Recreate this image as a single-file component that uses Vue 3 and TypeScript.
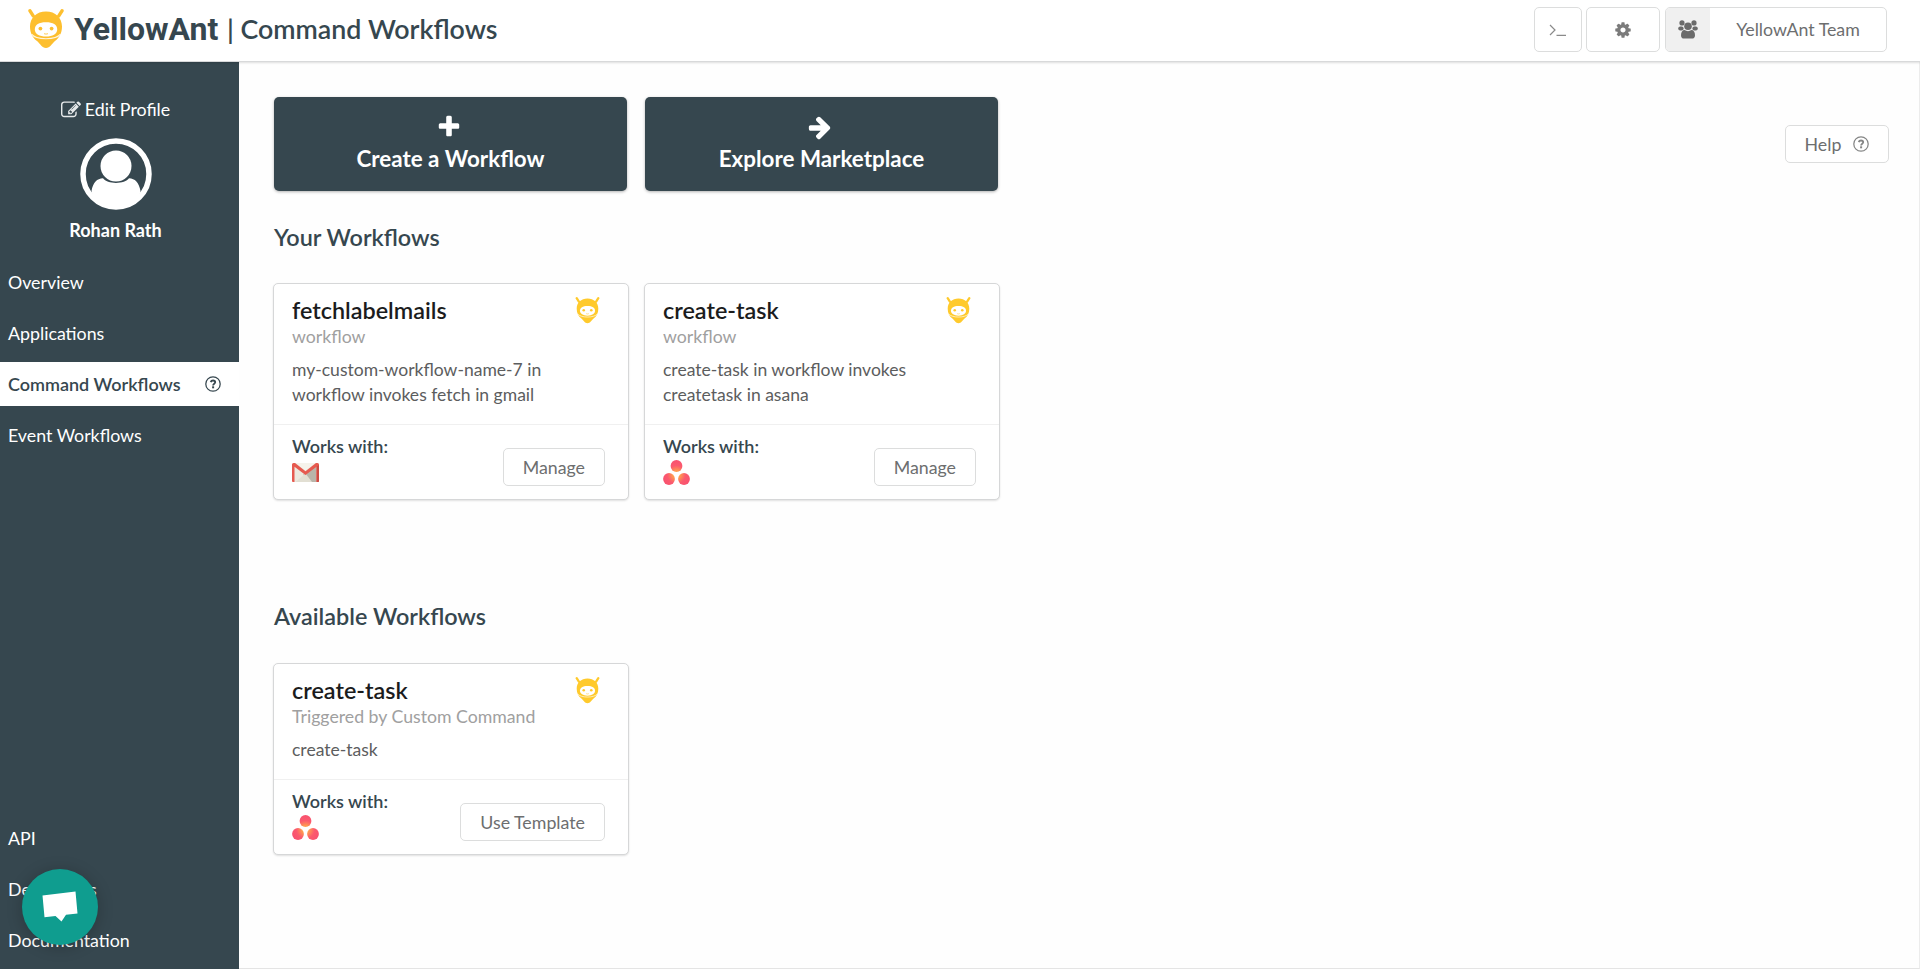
<script setup lang="ts">
interface Workflow {
  title: string
  meta: string
  lines: string[]
  app: 'gmail' | 'asana'
  action: string
}

interface Section {
  heading: string
  items: Workflow[]
}

const sections: Section[] = [
  {
    heading: 'Your Workflows',
    items: [
      {
        title: 'fetchlabelmails',
        meta: 'workflow',
        lines: ['my-custom-workflow-name-7 in', 'workflow invokes fetch in gmail'],
        app: 'gmail',
        action: 'Manage',
      },
      {
        title: 'create-task',
        meta: 'workflow',
        lines: ['create-task in workflow invokes', 'createtask in asana'],
        app: 'asana',
        action: 'Manage',
      },
    ],
  },
  {
    heading: 'Available Workflows',
    items: [
      {
        title: 'create-task',
        meta: 'Triggered by Custom Command',
        lines: ['create-task'],
        app: 'asana',
        action: 'Use Template',
      },
    ],
  },
]

const mainNav = ['Overview', 'Applications', 'Command Workflows', 'Event Workflows']
const footNav = ['API', 'Developers', 'Documentation']
const activeNav = 'Command Workflows'
</script>

<template>
  <!-- Shared symbols -->
  <svg class="defs" aria-hidden="true">
    <defs>
      <radialGradient id="asana-fill" gradientUnits="userSpaceOnUse" cx="13.5" cy="15.5" r="15">
        <stop offset="0" stop-color="#ffb440" />
        <stop offset="0.25" stop-color="#ff9a50" />
        <stop offset="0.6" stop-color="#fb5a6e" />
        <stop offset="1" stop-color="#f8506f" />
      </radialGradient>
      <symbol id="ant" viewBox="0 0 36 40">
        <path d="M2 1.8L5.2 6.8M34 1.8L30.8 6.8" stroke="currentColor" stroke-width="3.4" stroke-linecap="round" fill="none" />
        <path d="M18 2.4C27.5 2.4 34 8.6 34 17.5C34 24 31.5 28.5 27 32C24 34.5 22 39 18 39C14 39 12 34.5 9 32C4.5 28.5 2 24 2 17.5C2 8.6 8.500 2.400 18 2.400Z" fill="currentColor" />
        <path d="M6.800 20.500C6.800 15.500 11 13.200 18 13.200C25 13.200 29.200 15.500 29.200 20.500C29.200 25 24.500 27.600 18 27.600C11.500 27.600 6.800 25 6.800 20.500Z" fill="#fff" />
        <path d="M3.500 25.200C8 31.200 28 31.200 32.500 25.200" stroke="#fff" stroke-width="1.100" fill="none" opacity=".85" />
        <circle cx="12.400" cy="19.600" r="1.900" fill="currentColor" />
        <circle cx="23.600" cy="19.600" r="1.900" fill="currentColor" />
        <path d="M16 24.700Q18 25.500 20 24.700" stroke="currentColor" stroke-width=".8" fill="none" />
      </symbol>
      <symbol id="question" viewBox="0 0 16 16">
        <circle cx="8" cy="8" r="7.200" fill="none" stroke="currentColor" stroke-width="1.250" />
        <path d="M5.700 6.100C6.100 4.900 6.900 4.500 8 4.500C9.300 4.500 10.200 5.200 10.200 6.300C10.200 7.700 8.100 7.700 8.100 9.400" fill="none" stroke="currentColor" stroke-width="1.800" />
        <rect x="7.100" y="10.300" width="2" height="2" fill="currentColor" />
      </symbol>
    </defs>
  </svg>

  <div class="page">
    <header class="topbar">
      <div class="brand">
        <svg class="brand-logo"><use href="#ant" /></svg>
        <span class="wordmark">YellowAnt</span>
        <span class="page-title">| Command Workflows</span>
      </div>
      <div class="tools">
        <button class="btn terminal" aria-label="Console">
          <svg width="18" height="14" viewBox="0 0 18 14"><path d="M1 2L6 7L1 12M7.500 12.300H17" fill="none" stroke="#8a8a8a" stroke-width="1.200" /></svg>
        </button>
        <button class="btn gear" aria-label="Settings">
          <svg width="18" height="18" viewBox="0 0 1792 1792"><path fill="#7b7b7b" d="M1152 896q0-106-75-181t-181-75-181 75-75 181 75 181 181 75 181-75 75-181zm512-109v222q0 12-8 23t-20 13l-185 28q-19 54-39 91 35 50 107 138 10 12 10 25t-9 23q-27 37-99 108t-94 71q-12 0-26-9l-138-108q-44 23-91 38-16 136-29 186-7 28-36 28h-222q-14 0-24.500-8.500t-11.500-21.500l-28-184q-49-16-90-37l-141 107q-10 9-25 9-14 0-25-11-126-114-165-168-7-10-7-23 0-12 8-23 15-21 51-66.500t54-70.500q-27-50-41-99l-183-27q-13-2-21-12.500t-8-23.500v-222q0-12 8-23t19-13l186-28q14-46 39-92-40-57-107-138-10-12-10-24 0-10 9-23 26-36 98.500-107.500t94.500-71.500q13 0 26 10l138 107q44-23 91-38 16-136 29-186 7-28 36-28h222q14 0 24.500 8.500t11.500 21.500l28 184q49 16 90 37l142-107q9-9 24-9 13 0 25 10 129 119 165 170 7 8 7 22 0 12-8 23-15 21-51 66.500t-54 70.500q26 50 41 98l183 28q13 2 21 12.500t8 23.500z" /></svg>
        </button>
        <button class="btn team">
          <span class="team-icon">
            <svg width="20" height="19" viewBox="0 0 20 19" fill="#6b6b6b">
              <circle cx="4" cy="2.900" r="2.600" />
              <circle cx="16" cy="2.900" r="2.600" />
              <circle cx="10" cy="6.300" r="3.800" />
              <rect x="0.200" y="6.400" width="5.400" height="4.200" rx="2" />
              <rect x="14.400" y="6.400" width="5.400" height="4.200" rx="2" />
              <path d="M3 15.200C3 12 4.500 10 6.500 10C8.500 11.500 11.500 11.500 13.500 10C15.500 10 17 12 17 15.200C17 17.600 15.800 18.600 14 18.600H6C4.200 18.600 3 17.600 3 15.200Z" />
            </svg>
          </span>
          <span class="team-name">YellowAnt Team</span>
        </button>
      </div>
    </header>

    <div class="body">
      <aside class="sidebar">
        <div class="edit">
          <svg width="20" height="20" viewBox="0 0 1792 1792"><path fill="#e6e9ea" d="M888 1184l116-116-152-152-116 116v56h96v96h56zm440-720q-16-16-33 1l-350 350q-17 17-1 33t33-1l350-350q17-17 1-33zm80 594v190q0 119-84.500 203.500t-203.500 84.500h-832q-119 0-203.500-84.500t-84.500-203.500v-832q0-119 84.500-203.500t203.500-84.500h832q63 0 117 25 15 7 18 23 3 17-9 29l-49 49q-14 14-32 8-23-6-45-6h-832q-66 0-113 47t-47 113v832q0 66 47 113t113 47h832q66 0 113-47t47-113v-126q0-13 9-22l64-64q15-15 35-7t20 29zm-96-738l288 288-672 672h-288v-288zm444 132l-92 92-288-288 92-92q28-28 68-28t68 28l152 152q28 28 28 68t-28 68z" /></svg>
          <span>Edit Profile</span>
        </div>
        <svg class="avatar" viewBox="0 0 72 72">
          <circle cx="36" cy="36" r="33" fill="none" stroke="#fff" stroke-width="5.500" />
          <path d="M11.500 53C13 44.500 17 40.500 23 40.300C27 46.500 45 46.500 49 40.300C55 40.500 59 44.500 60.500 53L58 62L36 70L14 62Z" fill="#fff" />
          <circle cx="36" cy="28" r="15.500" fill="#fff" />
        </svg>
        <div class="user">Rohan Rath</div>
        <nav class="nav">
          <a v-for="item in mainNav" :key="item" :class="{ active: item === activeNav }">
            <span>{{ item }}</span>
            <svg v-if="item === activeNav" class="nav-help"><use href="#question" /></svg>
          </a>
        </nav>
        <nav class="nav foot">
          <a v-for="item in footNav" :key="item"><span>{{ item }}</span></a>
        </nav>
      </aside>

      <main class="content">
        <div class="primary">
          <div class="actions">
            <button class="cta">
              <svg width="26" height="26" viewBox="0 0 1792 1792"><path fill="#fff" d="M1600 736v192q0 40-28 68t-68 28h-416v416q0 40-28 68t-68 28h-192q-40 0-68-28t-28-68v-416h-416q-40 0-68-28t-28-68v-192q0-40 28-68t68-28h416v-416q0-40 28-68t68-28h192q40 0 68 28t28 68v416h416q40 0 68 28t28 68z" /></svg>
              <span>Create a Workflow</span>
            </button>
            <button class="cta">
              <svg width="26" height="26" viewBox="0 0 1792 1792"><path fill="#fff" d="M1600 960q0 54-37 91l-651 651q-39 37-91 37-51 0-90-37l-75-75q-38-38-38-91t38-91l293-293h-704q-52 0-84.500-37.500t-32.500-90.500v-128q0-53 32.500-90.500t84.500-37.500h704l-293-294q-38-36-38-90t38-90l75-75q38-38 90-38 53 0 91 38l651 651q37 35 37 90z" /></svg>
              <span>Explore Marketplace</span>
            </button>
          </div>

          <section v-for="section in sections" :key="section.heading" class="section">
            <h2>{{ section.heading }}</h2>
            <div class="cards">
              <article v-for="(wf, i) in section.items" :key="i" class="card">
                <div class="card-body">
                  <div class="card-text">
                    <h3>{{ wf.title }}</h3>
                    <div class="meta">{{ wf.meta }}</div>
                    <div class="desc">
                      <div v-for="line in wf.lines" :key="line">{{ line }}</div>
                    </div>
                  </div>
                  <svg class="card-ant"><use href="#ant" /></svg>
                </div>
                <div class="card-foot">
                  <div class="works">
                    <div class="works-label">Works with:</div>
                    <svg v-if="wf.app === 'gmail'" class="app" viewBox="0 0 27 27">
                      <rect x="0.500" y="4" width="26" height="19" rx="1" fill="#ece9df" />
                      <path d="M13.500 14.500L24 6V23H19L11 15.500Z" fill="#b9b5aa" />
                      <path d="M3.500 23L13.500 14.500L20 23Z" fill="#e2dfd3" />
                      <path d="M3.500 4H23.500L13.500 11.700Z" fill="#f5f3ec" />
                      <path d="M0 5.500Q0 4 1.500 4H3L13.500 12.300L24 4H25.500Q27 4 27 5.500V22Q27 23 26 23H24.500V7.700L13.500 16L2.500 7.700V23H1Q0 23 0 22Z" fill="#e65a50" />
                      <path d="M24.500 7.700L27 6V22Q27 23 26 23H24.500Z" fill="#cd4b43" />
                    </svg>
                    <svg v-else class="app" viewBox="0 0 27 27" fill="url(#asana-fill)">
                      <circle cx="13.500" cy="7" r="5.900" />
                      <circle cx="6" cy="20" r="5.900" />
                      <circle cx="21" cy="20" r="5.900" />
                    </svg>
                  </div>
                  <button class="btn card-btn">{{ wf.action }}</button>
                </div>
              </article>
            </div>
          </section>
        </div>

        <button class="btn help">
          <span>Help</span>
          <svg class="help-icon"><use href="#question" /></svg>
        </button>
      </main>
    </div>

    <div class="chat">
      <svg width="36" height="32" viewBox="0 0 36 32"><path d="M0.500 4.500L33.500 0.500L35.500 22.500L24 23.700L19.500 30.500L13.500 25L2.500 26.200Z" fill="#fff" /></svg>
    </div>
  </div>
</template>

<style>
body {
  margin: 0;
  overflow: hidden;
}
</style>

<style scoped>
.defs {
  position: absolute;
  width: 0;
  height: 0;
}

.page {
  position: relative;
  box-sizing: border-box;
  display: flex;
  flex-direction: column;
  height: 969px;
  background: #fefefe;
  color: #36474f;
  font: 17.8px/25px Lato, "Liberation Sans", sans-serif;
}

.page svg {
  display: block;
  flex: none;
}

button {
  font: inherit;
  margin: 0;
  padding: 0;
}

.topbar {
  position: relative;
  z-index: 1;
  box-sizing: border-box;
  display: flex;
  flex: none;
  justify-content: space-between;
  height: 62px;
  padding: 0 33px 0 28px;
  background: #fff;
  border-bottom: 1px solid #d8d9da;
  box-shadow: 0 1px 2px rgba(0, 0, 0, 0.13);
}

.brand {
  display: flex;
  align-items: center;
  height: 58px;
}

.brand .brand-logo {
  width: 36px;
  height: 40px;
  color: #fdbf2f;
}

.wordmark {
  margin-left: 10px;
  width: 145px;
  font: 700 32px/40px Roboto, sans-serif;
}

.page-title {
  margin-left: 8px;
  padding-top: 1px;
  font-size: 26.800px;
  font-weight: 600;
  white-space: nowrap;
}

.tools {
  display: flex;
  align-items: flex-start;
  padding-top: 7px;
}

.btn {
  box-sizing: border-box;
  display: flex;
  align-items: center;
  justify-content: center;
  border: 1px solid #dcdddd;
  border-radius: 5px;
  background: #fff;
  color: #6d6e6f;
}

.tools .btn {
  height: 45px;
}

.terminal {
  width: 48px;
}

.gear {
  width: 74px;
  margin-left: 4px;
}

.team {
  width: 222px;
  margin-left: 5px;
  overflow: hidden;
}

.team-icon {
  display: flex;
  align-items: center;
  justify-content: center;
  width: 44px;
  height: 43px;
  background: #f0f0f0;
}

.team-name {
  flex: 1;
  text-align: center;
}

.body {
  display: flex;
  flex: 1;
  min-height: 0;
}

.sidebar {
  box-sizing: border-box;
  display: flex;
  flex-direction: column;
  width: 239px;
  padding: 35px 0 7px;
  background: #36474f;
  color: #fff;
}

.edit {
  display: flex;
  align-items: center;
  justify-content: center;
  gap: 4px;
  padding-right: 8px;
}

.avatar {
  width: 72px;
  height: 72px;
  margin: 16px 0 0 79.500px;
}

.user {
  margin-top: 8px;
  padding-right: 8px;
  text-align: center;
  font-size: 18px;
  font-weight: 700;
}

.nav {
  display: flex;
  flex-direction: column;
  gap: 7px;
  margin-top: 17px;
}

.nav a {
  display: flex;
  align-items: center;
  justify-content: space-between;
  height: 44px;
  padding: 0 18px 0 8px;
}

.nav a.active {
  background: #fff;
  color: #36474f;
  font-size: 18px;
  font-weight: 600;
}

.nav .nav-help {
  width: 16px;
  height: 16px;
}

.nav.foot {
  margin-top: auto;
}

.content {
  box-sizing: border-box;
  display: flex;
  flex: 1;
  align-items: flex-start;
  justify-content: space-between;
  padding: 35px 30px 0 34px;
  border-right: 1px solid #ececec;
  border-bottom: 1px solid #e4e4e4;
}

.actions {
  display: flex;
  gap: 18px;
  padding-left: 1px;
}

.cta {
  box-sizing: border-box;
  display: flex;
  flex-direction: column;
  align-items: center;
  width: 353px;
  height: 94px;
  padding: 17px 4px 0 0;
  border: 0;
  border-radius: 5px;
  background: #36474f;
  color: #fff;
  box-shadow: 0 1px 3px rgba(0, 0, 0, 0.3);
}

.cta span {
  margin: 4px 0 0 4px;
  font-size: 22.400px;
  font-weight: 700;
  line-height: 29px;
}

.section h2 {
  margin: 32px 0 0 1px;
  font-size: 23.400px;
  font-weight: 600;
  line-height: 28px;
}

.cards {
  display: flex;
  gap: 15px;
  margin-top: 32px;
}

.section + .section {
  padding-top: 70px;
}

.section + .section .cards {
  margin-top: 33px;
}

.card {
  box-sizing: border-box;
  width: 356px;
  border: 1px solid #d6d7d8;
  border-radius: 5px;
  background: #fff;
  box-shadow: 0 1px 2px rgba(0, 0, 0, 0.12);
}

.card-body {
  display: flex;
  justify-content: space-between;
  padding: 12px 27px 17px 18px;
  border-bottom: 1px solid #f0f0f0;
}

.card h3 {
  margin: 0;
  color: #1b1c1d;
  font-size: 23.400px;
  font-weight: 600;
  line-height: 28px;
}

.meta {
  color: #a0a0a0;
  font-size: 17.700px;
}

.desc {
  margin-top: 8px;
  color: #5c5d5e;
  font-size: 17.550px;
}

.card-body .card-ant {
  width: 27px;
  height: 27px;
  margin-top: 1px;
  color: #ffca2c;
}

.card-foot {
  display: flex;
  justify-content: space-between;
  height: 65px;
  padding: 9px 23px 0 18px;
}

.works-label {
  font-size: 18px;
  font-weight: 600;
}

.app {
  width: 27px;
  height: 27px;
}

.card-btn {
  height: 38px;
  margin-top: 14px;
  padding: 0 19px;
}

.help {
  gap: 12px;
  width: 104px;
  height: 38px;
  margin-top: 28px;
}

.help .help-icon {
  width: 16px;
  height: 16px;
  color: #858686;
}

.chat {
  position: absolute;
  z-index: 2;
  left: 22px;
  top: 869px;
  display: flex;
  align-items: center;
  justify-content: center;
  width: 76px;
  height: 76px;
  border-radius: 50%;
  background: #0f9d8f;
  box-shadow: 0 2px 16px rgba(0, 0, 0, 0.22);
}
</style>
